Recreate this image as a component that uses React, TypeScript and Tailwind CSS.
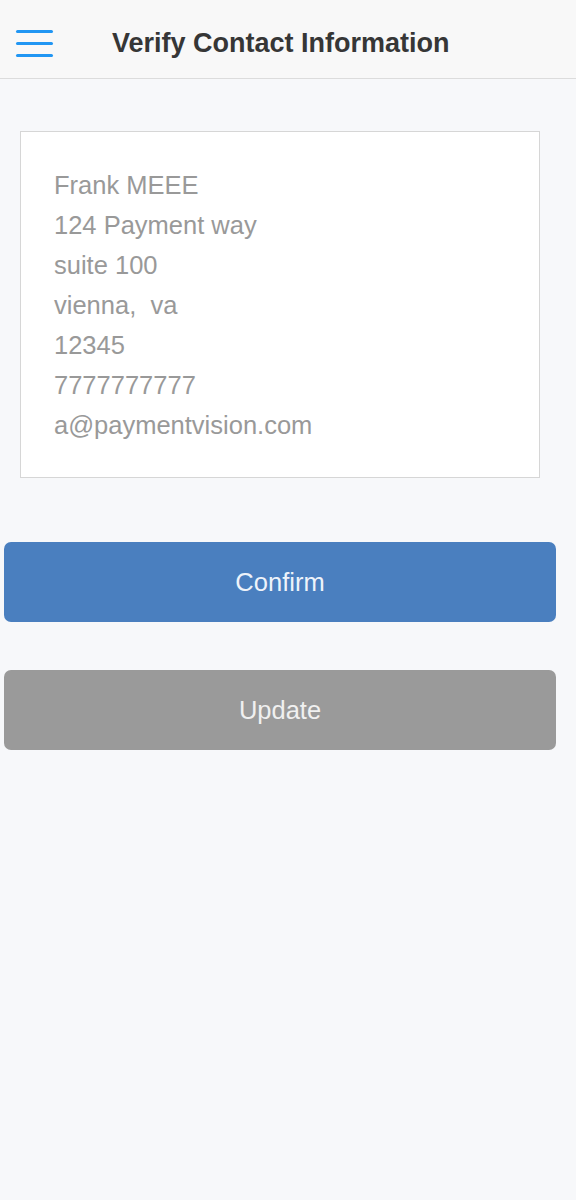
export default function App() {
  const lines = [
    'Frank MEEE',
    '124 Payment way',
    'suite 100',
    'vienna,\u00a0\u00a0va',
    '12345',
    '7777777777',
    'a@paymentvision.com',
  ];

  return (
    <div className="min-h-[1200px] bg-[#f7f8fa] font-['Liberation_Sans',Arial,sans-serif]">
      {/* header */}
      <div className="h-[79px] pt-[8px] flex items-center bg-[#f8f8f8] border-b border-[#dcdcdc]">
        <button className="ml-[16px] w-[37px] flex flex-col gap-[9px]">
          <span className="block h-[3px] bg-[#2196f3] rounded-full" />
          <span className="block h-[3px] bg-[#2196f3] rounded-full" />
          <span className="block h-[3px] bg-[#2196f3] rounded-full" />
        </button>
        <h1 className="ml-[59px] text-[27px] font-bold text-[#363636]">
          Verify Contact Information
        </h1>
      </div>

      {/* address card */}
      <div className="mt-[52px] ml-[20px] w-[520px] bg-white border border-[#d6d6d6] pt-[33px] pb-[32px] px-[33px]">
        {lines.map((line) => (
          <p key={line} className="text-[25.5px] leading-[40px] text-[#999]">
            {line}
          </p>
        ))}
      </div>

      {/* actions */}
      <div className="mt-[64px] ml-[4px] w-[552px] flex flex-col gap-[48px]">
        <button className="h-[80px] rounded-[7px] bg-[#4a7fbf] text-[25.5px] text-[#eef3fa]">
          Confirm
        </button>
        <button className="h-[80px] rounded-[7px] bg-[#9a9a9a] text-[25.5px] text-[#f0f0f0]">
          Update
        </button>
      </div>
    </div>
  );
}
